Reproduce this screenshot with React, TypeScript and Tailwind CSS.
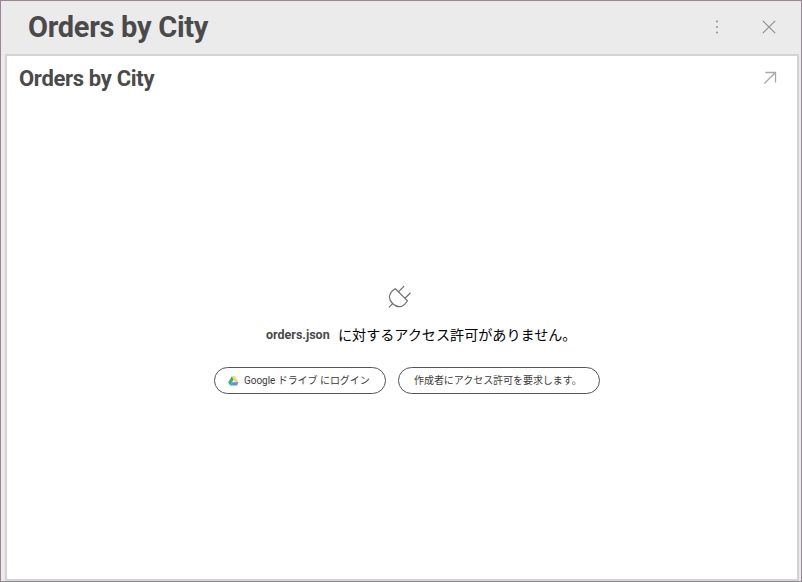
function MoreIcon() {
  return (
    <svg width="4" height="14" viewBox="0 0 4 14" fill="#999999">
      <circle cx="2" cy="1.5" r="1.1" />
      <circle cx="2" cy="7" r="1.1" />
      <circle cx="2" cy="12.5" r="1.1" />
    </svg>
  );
}

function CloseIcon() {
  return (
    <svg width="14" height="14" viewBox="0 0 14 14" stroke="#8c8c8c" strokeWidth="1.1">
      <path d="M.8.8l12.4 12.4M13.2.8L.8 13.2" />
    </svg>
  );
}

function ExpandIcon() {
  return (
    <svg width="14" height="14" viewBox="0 0 14 14" fill="none" stroke="#a8a8a8" strokeWidth="1.3">
      <path d="M2.5 1.5h10v10M12.5 1.5L1.3 12.5" />
    </svg>
  );
}

function PlugIcon() {
  return (
    <svg width="24" height="24" viewBox="0 0 24 24" fill="none" stroke="#707070" strokeWidth="1.2">
      <path d="M7.3 3.7L19.5 15.8C18 18.3 16 20.4 13.8 21.2C11 22.2 7.5 21.3 4.8 18.7C2.1 16 .9 12.8 1.7 10.2C2.5 7.3 4.8 5 7.3 3.7Z" />
      <path d="M10.6 6.7L16.1 1.2M17 13.2L22.5 7.8M4.6 18.7L.9 22.4" />
    </svg>
  );
}

function DriveIcon() {
  return (
    <svg width="11" height="10" viewBox="0 0 11 10">
      <path fill="#fbd36b" d="M3.7.3h3.3l3.6 6.2H7z" />
      <path fill="#34b37a" d="M3.7.3l1.9 3.1-3.6 6.2L.2 6.5z" />
      <path fill="#5c8ff0" d="M3.9 6.2h6.7L8.9 9.6H2z" />
    </svg>
  );
}

export default function App() {
  return (
    <div className="flex h-[582px] w-[802px] flex-col overflow-hidden border border-[#9b8594] border-b-[#8e8a8e] bg-[#ebebeb] font-['Roboto','Noto_Sans_CJK_JP',sans-serif] text-[#4a4a4a]">
      <header className="flex h-[53px] shrink-0 items-center pr-[25px] pb-px pl-[27px]">
        <h1 className="flex-1 pt-px text-[29px] leading-none font-bold tracking-[-0.28px]">Orders by City</h1>
        <button aria-label="More" className="mr-[43px]"><MoreIcon /></button>
        <button aria-label="Close"><CloseIcon /></button>
      </header>
      <main className="mr-[2px] ml-[4px] flex flex-1 flex-col border-2 border-[#d3d3d3] bg-white">
        <div className="flex h-[44px] shrink-0 items-center pr-[20px] pl-3">
          <h2 className="flex-1 pt-[2px] text-[22px] leading-none font-bold tracking-[-0.32px]">Orders by City</h2>
          <button aria-label="Expand"><ExpandIcon /></button>
        </div>
        <div className="flex flex-col pt-[185px]">
          <div className="ml-[381px]"><PlugIcon /></div>
          <p className="mt-[16px] ml-[259px] flex h-5 items-center whitespace-nowrap">
            <strong className="w-[72px] text-[12.5px]">orders.json</strong>
            <span className="pt-px text-[14.1px] text-black">に対するアクセス許可がありません。</span>
          </p>
          <div className="mt-[22px] ml-[207px] flex gap-3 text-[10px] tracking-[-0.05px] whitespace-nowrap text-[#3c3c3c]">
            <button className="flex h-[27px] w-[172px] items-center rounded-full border border-[#555] pl-[13px]">
              <DriveIcon />
              <span className="ml-[5px]">Google ドライブ にログイン</span>
            </button>
            <button className="flex h-[27px] w-[202px] items-center rounded-full border border-[#555] pl-[15px]">
              作成者にアクセス許可を要求します。
            </button>
          </div>
        </div>
      </main>
    </div>
  );
}
